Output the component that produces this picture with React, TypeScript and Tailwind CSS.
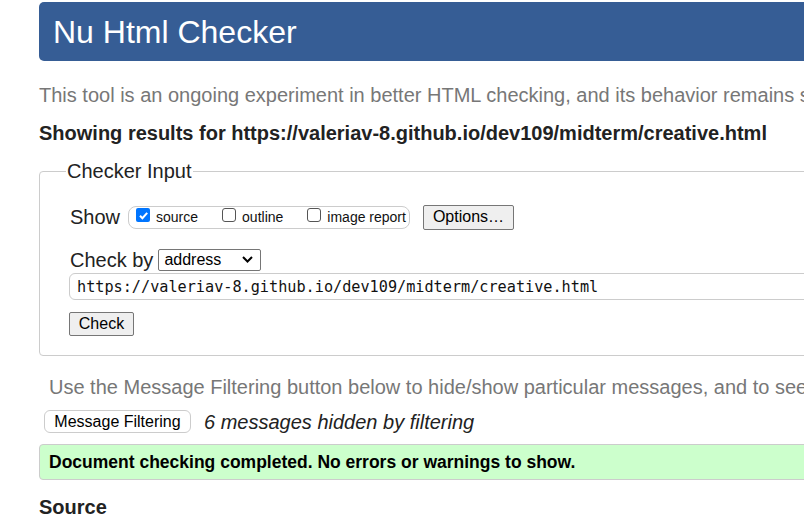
import React from "react";

const f = { fontFamily: '"Liberation Sans", Arial, sans-serif' };

function Check({ checked, label }: { checked?: boolean; label: string }) {
  return (
    <label className="flex shrink-0 items-center">
      {checked ? (
        <span className="mb-[4px] flex h-[14px] w-[14px] shrink-0 items-center justify-center rounded-[2px] bg-[#0075ff]">
          <svg width="11" height="11" viewBox="0 0 11 11">
            <path d="M2 5.8l2.4 2.4L9.2 2.8" fill="none" stroke="#fff" strokeWidth="2" />
          </svg>
        </span>
      ) : (
        <span className="mb-[4px] h-[14px] w-[14px] shrink-0 rounded-[3px] border border-[#555] bg-white" />
      )}
      <span className="ml-[6px] whitespace-nowrap text-[14px] leading-[16px] text-[#111]">{label}</span>
    </label>
  );
}

export default function App() {
  return (
    <div className="h-[523px] w-[804px] overflow-hidden bg-white text-[#222]" style={f}>
      <div className="ml-[39px] w-[1000px]">
        <div className="mt-[2px] flex h-[59px] items-center rounded-[5px] bg-[#365d95] pl-[14px] text-[32px] leading-[36px] text-white">
          Nu Html Checker
        </div>
        <p className="mt-[22px] whitespace-nowrap text-[20px] leading-[24px] text-[#777]">
          This tool is an ongoing experiment in better HTML checking, and its behavior remains subject to change
        </p>
        <p className="mt-[14px] whitespace-nowrap text-[20px] font-bold leading-[24px] text-[#222]">
          Showing results for https://valeriav-8.github.io/dev109/midterm/creative.html
        </p>
        <fieldset className="mt-[14px] rounded-[4px] border border-[#ccc] pb-[19px] pl-[30px]">
          <legend className="-ml-[4px] px-[1px] text-[20px] leading-[24px] text-[#222]">Checker Input</legend>
          <div className="mt-[21px] flex h-[26px] items-center">
            <span className="text-[20px] leading-[24px]">Show</span>
            <div className="ml-[8px] flex h-[23px] items-center gap-[24px] rounded-[8px] border border-[#ccc] pl-[7px] pr-[3px]">
              <Check checked label="source" />
              <Check label="outline" />
              <Check label="image report" />
            </div>
            <button className="ml-[13px] h-[25px] rounded-[2px] border border-[#767676] bg-[#efefef] px-[9px] text-[16px] leading-[20px] text-black">
              Options…
            </button>
          </div>
          <div className="mt-[18px] flex h-[23px] items-center">
            <span className="text-[20px] leading-[24px]">Check by</span>
            <div className="ml-[5px] flex h-[22px] w-[103px] items-center justify-between rounded-[2px] border border-[#767676] pl-[5px] pr-[7px] text-[16px] leading-[20px] text-black">
              <span>address</span>
              <svg width="11" height="7" viewBox="0 0 11 7">
                <path d="M1 1l4.5 4.5L10 1" fill="none" stroke="#000" strokeWidth="2" />
              </svg>
            </div>
          </div>
          <div className="-ml-[1px] mt-[2px] flex h-[27px] items-center rounded-[6px] border border-[#ccc] pl-[7px]">
            <span className="text-[15.2px] leading-[20px] text-[#111]" style={{ fontFamily: '"DejaVu Sans Mono", "Liberation Mono", monospace' }}>
              https://valeriav-8.github.io/dev109/midterm/creative.html
            </span>
          </div>
          <button className="-ml-[1px] mt-[12px] h-[24px] w-[65px] rounded-[2px] border border-[#767676] bg-[#efefef] text-[16px] leading-[20px] text-black">
            Check
          </button>
        </fieldset>
        <p className="mt-[19px] whitespace-nowrap pl-[10px] text-[20px] leading-[24px] text-[#777]">
          Use the Message Filtering button below to hide/show particular messages, and to see total counts of errors and warnings.
        </p>
        <div className="mt-[10px] flex h-[25px] items-center">
          <button className="ml-[5px] h-[23px] w-[147px] rounded-[6px] border border-[#ccc] bg-white text-[16px] leading-[20px] text-black">
            Message Filtering
          </button>
          <span className="ml-[13px] text-[20px] italic leading-[24px] text-[#222]">6 messages hidden by filtering</span>
        </div>
        <div className="mt-[10px] flex h-[36px] items-center rounded-[4px] border border-[#ccc] bg-[#ccffcc] pl-[9px]">
          <span className="text-[17.5px] font-bold leading-[22px] text-black">
            Document checking completed. No errors or warnings to show.
          </span>
        </div>
        <h2 className="mt-[15px] text-[20px] font-bold leading-[24px] text-[#222]">Source</h2>
      </div>
    </div>
  );
}
